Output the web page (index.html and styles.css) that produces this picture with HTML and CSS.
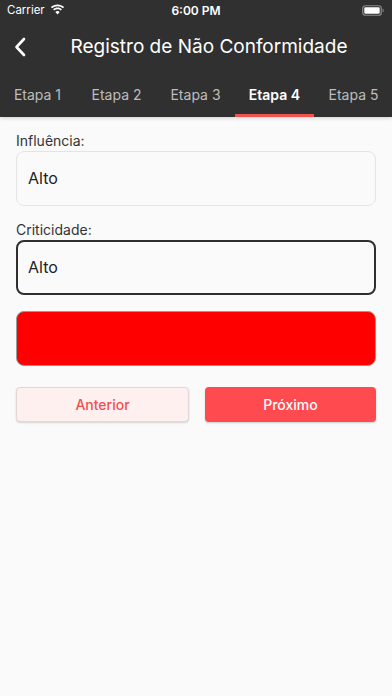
FILE: index.html
```html
<!DOCTYPE html>
<html lang="pt">
<head>
<meta charset="utf-8">
<link rel="stylesheet" href="styles.css">
</head>
<body>
<div class="header">
  <div class="status">
    <div class="status-left">
      <span class="carrier">Carrier</span>
      <svg class="wifi" width="15" height="11" viewBox="0 0 15 11">
        <path d="M7.5 2.2c2.1 0 4 .8 5.5 2.1l1.1-1.2C12.4 1.5 10 .6 7.5.6S2.6 1.5.9 3.1L2 4.3c1.5-1.3 3.4-2.1 5.5-2.1z" fill="#fff"/>
        <path d="M7.5 5.2c1.3 0 2.4.5 3.3 1.2l1.1-1.2C10.7 4.2 9.2 3.6 7.5 3.6s-3.2.6-4.4 1.6l1.1 1.2c.9-.7 2-1.2 3.3-1.2z" fill="#fff"/>
        <path d="M7.5 10.4 9.7 8c-.6-.5-1.4-.9-2.2-.9s-1.6.3-2.2.9z" fill="#fff"/>
      </svg>
    </div>
    <span class="time">6:00 PM</span>
    <div class="status-right">
      <svg width="22" height="11" viewBox="0 0 22 11">
        <rect x="0.75" y="0.75" width="18.5" height="9.5" rx="2.6" fill="none" stroke="#8a8a8a" stroke-width="1.2"/>
        <rect x="2.3" y="2.3" width="15.4" height="6.4" rx="1.3" fill="#fff"/>
        <path d="M20.6 3.6c.7.2 1.1.9 1.1 1.9s-.4 1.7-1.1 1.9z" fill="#8a8a8a"/>
      </svg>
    </div>
  </div>
  <div class="appbar">
    <svg class="back" width="12" height="20" viewBox="0 0 12 20">
      <path d="M10 2 2.5 10 10 18" fill="none" stroke="#fff" stroke-width="2.6" stroke-linecap="round" stroke-linejoin="round"/>
    </svg>
    <h1 class="title">Registro de Não Conformidade</h1>
  </div>
  <div class="tabs">
    <div class="tab">Etapa 1</div>
    <div class="tab">Etapa 2</div>
    <div class="tab">Etapa 3</div>
    <div class="tab active">Etapa 4</div>
    <div class="tab">Etapa 5</div>
  </div>
</div>
<main class="content">
  <label class="label">Influência:</label>
  <div class="field">Alto</div>
  <label class="label second">Criticidade:</label>
  <div class="field focused">Alto</div>
  <div class="swatch"></div>
  <div class="actions">
    <button class="btn prev">Anterior</button>
    <button class="btn next">Próximo</button>
  </div>
</main>
</body>
</html>
```
FILE: styles.css
```css
* { box-sizing: border-box; }
html, body {
  margin: 0;
  padding: 0;
  width: 392px;
  height: 696px;
  background: #fafafa;
  font-family: Inter, "Noto Sans", sans-serif;
  overflow: hidden;
}
.header {
  background: #303030;
  color: #fff;
  box-shadow: 0 1px 4px rgba(0,0,0,0.18);
  position: relative;
  z-index: 1;
}
.status {
  height: 20px;
  display: flex;
  align-items: center;
  justify-content: space-between;
  padding: 0 8px 0 7px;
  position: relative;
}
.status-left { display: flex; align-items: center; gap: 5px; width: 80px; }
.carrier { font-size: 11.5px; color: #fff; }
.wifi { margin-top: -1px; }
.time {
  position: absolute;
  left: 0; right: 0;
  text-align: center;
  font-size: 12px;
  font-weight: 600;
}
.status-right { display: flex; align-items: center; width: 80px; justify-content: flex-end; }
.appbar {
  height: 56px;
  display: flex;
  align-items: center;
  padding-left: 14px;
}
.back { flex: none; margin-top: -3px; }
.title {
  margin: 0 0 4px 0;
  flex: 1;
  text-align: center;
  font-size: 19px;
  font-weight: 400;
  padding-right: 0;
  letter-spacing: 0;
}
.tabs {
  height: 41px;
  display: flex;
  margin-left: -2px;
}
.tab {
  flex: none;
  width: 79px;
  display: flex;
  align-items: center;
  justify-content: center;
  font-size: 14px;
  color: #bdbdbd;
  border-bottom: 3px solid transparent;
  padding-bottom: 2px;
}
.tab.active {
  color: #fff;
  font-weight: 600;
  border-bottom-color: #ef5350;
}
.content {
  padding: 15px 16px 0 16px;
  display: flex;
  flex-direction: column;
}
.label {
  font-size: 14px;
  color: #333;
  line-height: 18px;
  margin-bottom: 1px;
}
.label.second { margin-top: 15px; }
.field {
  height: 55px;
  flex: none;
  border: 1px solid #e4e4e4;
  border-radius: 8px;
  display: flex;
  align-items: center;
  padding-left: 11px;
  font-size: 16px;
  color: #222;
  padding-bottom: 2px;
}
.field.focused {
  border: 2px solid #2f2f2f;
  padding-left: 10px;
}
.swatch {
  flex: none;
  margin-top: 16px;
  height: 55px;
  background: #ff0000;
  border: 1.5px solid #9a9a9a;
  border-radius: 8px;
}
.actions {
  margin-top: 21px;
  display: flex;
  gap: 16px;
}
.btn {
  flex: 1;
  height: 35px;
  border-radius: 4px;
  font-family: inherit;
  font-size: 14px;
  font-weight: 500;
  cursor: pointer;
}
.prev {
  background: #fff0f0;
  border: 1px solid #e3d6d6;
  color: #f05050;
  box-shadow: 0 1px 2px rgba(0,0,0,0.15);
}
.next {
  background: #ff4b4f;
  border: none;
  color: #fff;
  font-weight: 500;
  box-shadow: 0 1px 2px rgba(0,0,0,0.2);
}
```
